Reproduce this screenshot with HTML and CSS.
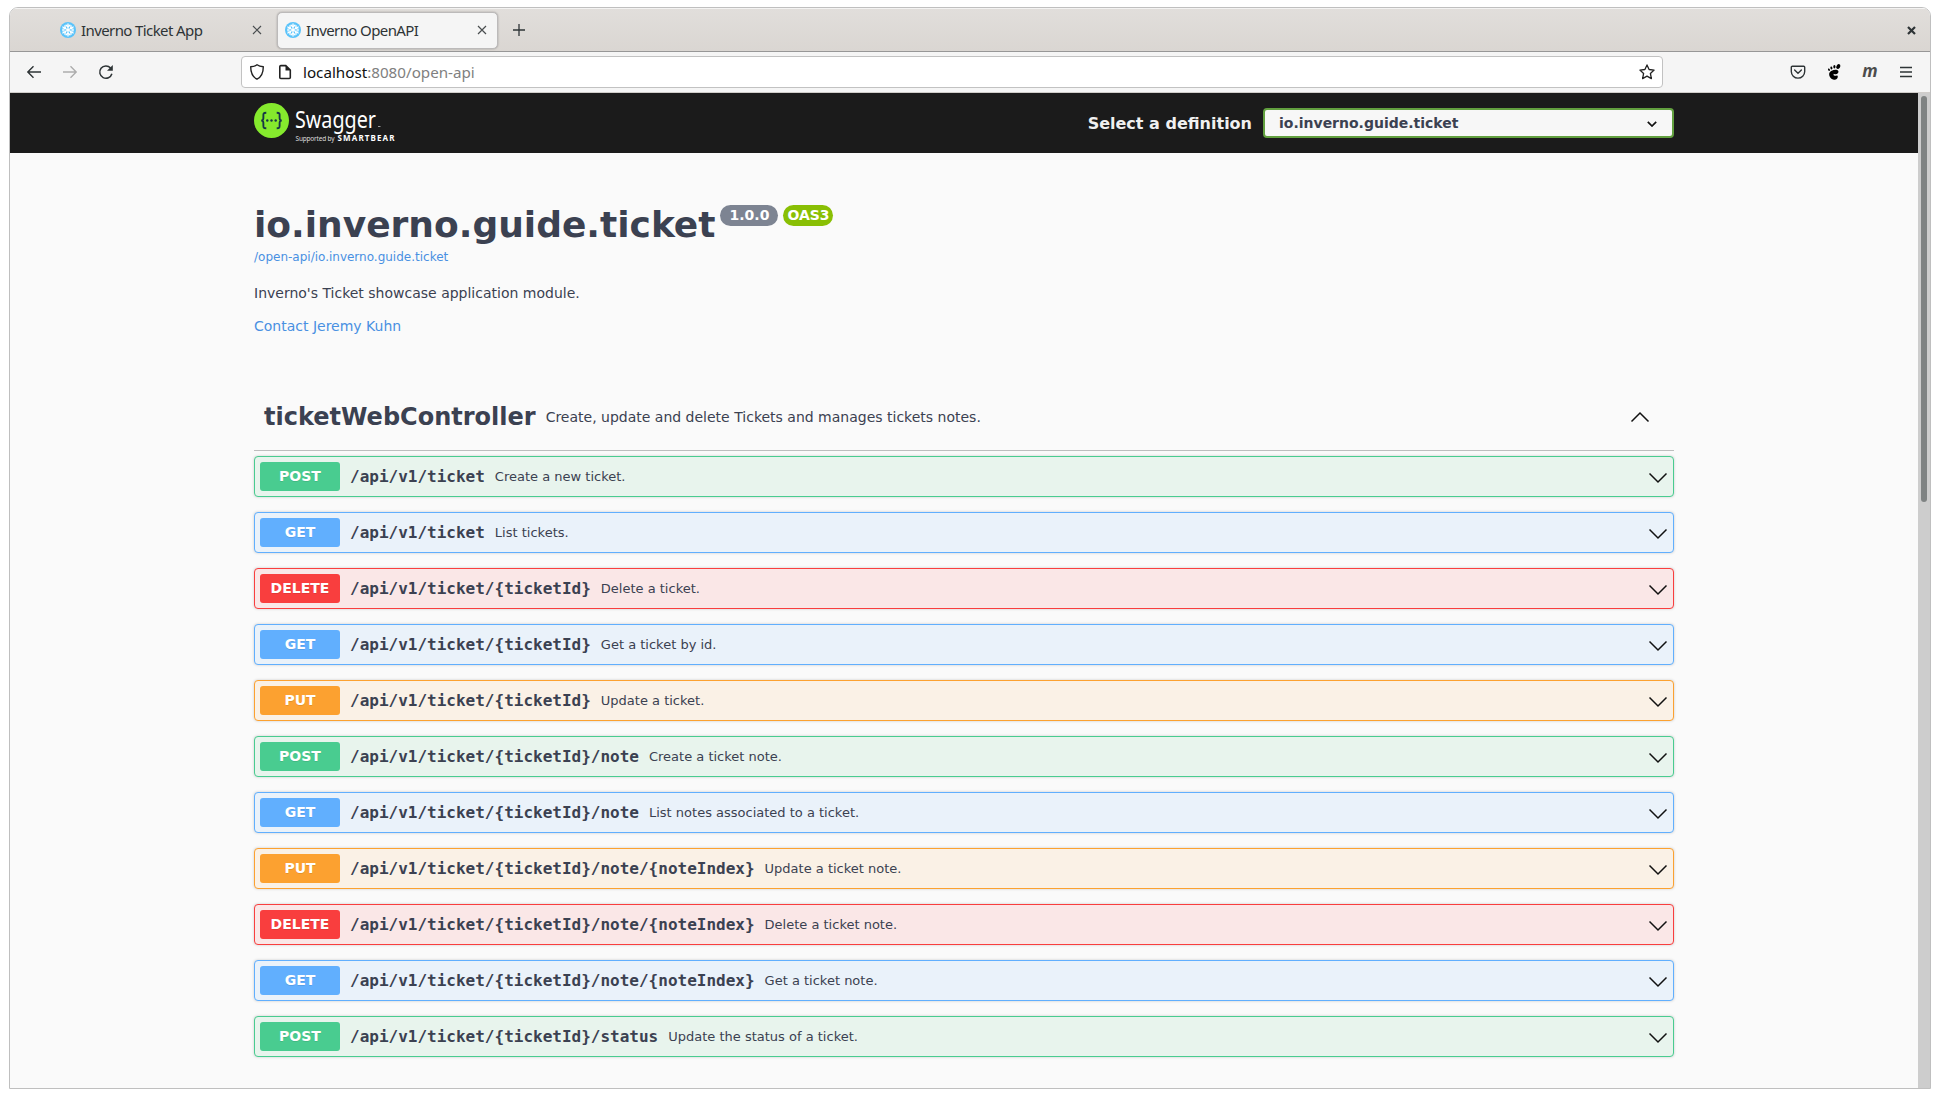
FILE: index.html
```html
<!DOCTYPE html>
<html lang="en">
<head>
<meta charset="utf-8">
<title>Inverno OpenAPI</title>
<link rel="stylesheet" href="styles.css">
</head>
<body>
<svg width="0" height="0" class="defs">
  <defs>
    <symbol id="flake" viewBox="0 0 16 16">
      <circle cx="8" cy="8" r="8" fill="#5ac3fa"/>
      <g stroke="#fff" stroke-width="1.300" fill="none">
        <g id="arm"><path d="M8 1.500v13M5.600 2.800 8 5.200l2.400-2.400M5.600 13.200 8 10.800l2.400 2.400"/></g>
        <use href="#arm" transform="rotate(60 8 8)"/>
        <use href="#arm" transform="rotate(120 8 8)"/>
      </g>
    </symbol>
    <symbol id="cross" viewBox="0 0 10 10"><path d="M1 1l8 8M9 1l-8 8" stroke="#4a4e50" stroke-width="1.200" fill="none"/></symbol>
    <symbol id="down" viewBox="0 0 20 20"><path d="M1.500 6.500 10 15l8.500-8.500" stroke="#111" stroke-width="1.500" fill="none"/></symbol>
  </defs>
</svg>
<div class="window">
  <div class="tabs">
    <div class="tab"><svg class="fav"><use href="#flake"/></svg><span>Inverno Ticket App</span><svg class="x"><use href="#cross"/></svg></div>
    <div class="tab active"><svg class="fav"><use href="#flake"/></svg><span>Inverno OpenAPI</span><svg class="x"><use href="#cross"/></svg></div>
    <svg class="plus" viewBox="0 0 12 12"><path d="M6 0v12M0 6h12" stroke="#2e3436" stroke-width="1.300"/></svg>
    <svg class="close" viewBox="0 0 9 9"><path d="M1 1l7 7M8 1l-7 7" stroke="#2e3436" stroke-width="2.200"/></svg>
  </div>
  <div class="toolbar">
    <div class="nav">
      <svg viewBox="0 0 16 16" fill="none" stroke="#2e3436" stroke-width="1.400"><path d="M15 8H2M7.500 2.300 1.800 8l5.700 5.700"/></svg>
      <svg viewBox="0 0 16 16" fill="none" stroke="#adadad" stroke-width="1.400"><path d="M1 8h13M8.500 2.300 14.200 8l-5.700 5.700"/></svg>
      <svg viewBox="0 0 16 16" fill="none" stroke="#2e3436" stroke-width="1.500"><path d="M13.900 9.800A6.200 6.200 0 1 1 12.600 4"/><path d="M14.800 1v5.800H9z" fill="#2e3436" stroke="none"/></svg>
    </div>
    <div class="url">
      <svg viewBox="0 0 16 16" fill="none" stroke="#222" stroke-width="1.400"><path d="M8 .8c2 1.500 4.200 1.900 6.300 2 0 5.700-1.300 10-6.300 12.400C3 12.800 1.700 8.500 1.700 2.800 3.800 2.700 6 2.300 8 .8z" stroke-linejoin="round"/></svg>
      <svg class="page" viewBox="0 0 16 16" fill="none" stroke="#222" stroke-width="1.600"><path d="M3.800 1.600h5L13.300 6v7.500a1 1 0 0 1-1 1H3.800a1 1 0 0 1-1-1v-11a1 1 0 0 1 1-.9z"/><path d="M8.500 1.500v5h5z" fill="#222" stroke="none"/></svg>
      <span class="addr"><b>localhost</b>:8080/open-api</span>
      <svg class="star" viewBox="0 0 16 16" fill="none" stroke="#222" stroke-width="1.300" stroke-linejoin="round"><path d="M8 .9l2.100 4.600 5 .6-3.700 3.400 1 5.100L8 12.100l-4.400 2.500 1-5.100L.9 6.100l5-.6z"/></svg>
    </div>
    <div class="tools">
      <svg viewBox="0 0 16 16" fill="none" stroke="#2e3436" stroke-width="1.400"><path d="M2.300 2.200h11.400a1 1 0 0 1 1 1v4.200a6.700 6.700 0 0 1-13.400 0V3.200a1 1 0 0 1 1-1z"/><path d="M4.600 6 8 9.200 11.400 6" stroke-linecap="round"/></svg>
      <svg viewBox="0 0 16 16" fill="#000"><ellipse cx="12.300" cy="2.500" rx="1.800" ry="2.500" transform="rotate(25 12.300 2.500)"/><ellipse cx="8.400" cy="2.800" rx="1.100" ry="1.700"/><ellipse cx="5.400" cy="3.900" rx="1" ry="1.500" transform="rotate(-15 5.400 3.900)"/><ellipse cx="3" cy="5.700" rx=".9" ry="1.300" transform="rotate(-30 3 5.700)"/><path d="M3.300 9C4.200 6 11.200 4.600 12.300 7c.9 2.300-2.600 4.200-4.400 2.700-.9 1.300 0 2.100 1.100 2 1.200 0 2-.7 2.700.2.500 2.300-1.500 3.900-3.600 3.800C5.200 15.600 2.500 12.200 3.300 9z"/></svg>
      <i class="m">m</i>
      <svg viewBox="0 0 16 16" stroke="#2e3436" stroke-width="1.400"><path d="M2 3.500h12M2 8h12M2 12.500h12"/></svg>
    </div>
  </div>
  <div class="view">
    <div class="doc">
      <header class="topbar">
        <div class="wrap">
          <svg class="logo" viewBox="0 0 142 42">
            <circle cx="17.500" cy="17.500" r="17.500" fill="#85ea2d"/>
            <g fill="none" stroke="#173647" stroke-width="1.900"><path d="M12.300 9.700c-3 0-3.100.8-2.900 4.200.1 2.500-.4 3.600-2.200 3.600 1.800 0 2.300 1.100 2.200 3.600-.2 3.400-.1 4.200 2.900 4.200M22.700 9.700c3 0 3.100.8 2.900 4.200-.1 2.500.4 3.600 2.200 3.600-1.800 0-2.300 1.100-2.200 3.600.2 3.400.1 4.200-2.900 4.200"/></g>
            <g fill="#173647"><circle cx="13.300" cy="17.500" r="1.200"/><circle cx="17.500" cy="17.500" r="1.200"/><circle cx="21.700" cy="17.500" r="1.200"/></g>
            <text x="41" y="24.500" class="brand" textLength="81" lengthAdjust="spacingAndGlyphs">Swagger</text>
            <path d="M124 23.500h2.500" stroke="#999"/>
            <text x="41.500" y="38" class="by" textLength="39">Supported by</text>
            <text x="83.500" y="38" class="bear" textLength="57">SMARTBEAR</text>
          </svg>
          <label class="pick"><span>Select a definition</span>
            <span class="select">io.inverno.guide.ticket<svg viewBox="0 0 10 6"><path d="M.8.800 5 5 9.200.800" fill="none" stroke="#111" stroke-width="1.700"/></svg></span>
          </label>
        </div>
      </header>
      <main class="wrap-main">
        <section class="info">
          <h1>io.inverno.guide.ticket<span class="ver">1.0.0</span><span class="ver oas">OAS3</span></h1>
          <a class="spec">/open-api/io.inverno.guide.ticket</a>
          <p>Inverno's Ticket showcase application module.</p>
          <a class="contact">Contact Jeremy Kuhn</a>
        </section>
        <div class="tag"><h3>ticketWebController</h3><small>Create, update and delete Tickets and manages tickets notes.</small><svg class="chev up"><use href="#down"/></svg></div>
        <div class="ops">
          <div class="op post"><b>POST</b><code>/api/v1/ticket</code><span>Create a new ticket.</span><svg class="chev"><use href="#down"/></svg></div>
          <div class="op get"><b>GET</b><code>/api/v1/ticket</code><span>List tickets.</span><svg class="chev"><use href="#down"/></svg></div>
          <div class="op delete"><b>DELETE</b><code>/api/v1/ticket/{ticketId}</code><span>Delete a ticket.</span><svg class="chev"><use href="#down"/></svg></div>
          <div class="op get"><b>GET</b><code>/api/v1/ticket/{ticketId}</code><span>Get a ticket by id.</span><svg class="chev"><use href="#down"/></svg></div>
          <div class="op put"><b>PUT</b><code>/api/v1/ticket/{ticketId}</code><span>Update a ticket.</span><svg class="chev"><use href="#down"/></svg></div>
          <div class="op post"><b>POST</b><code>/api/v1/ticket/{ticketId}/note</code><span>Create a ticket note.</span><svg class="chev"><use href="#down"/></svg></div>
          <div class="op get"><b>GET</b><code>/api/v1/ticket/{ticketId}/note</code><span>List notes associated to a ticket.</span><svg class="chev"><use href="#down"/></svg></div>
          <div class="op put"><b>PUT</b><code>/api/v1/ticket/{ticketId}/note/{noteIndex}</code><span>Update a ticket note.</span><svg class="chev"><use href="#down"/></svg></div>
          <div class="op delete"><b>DELETE</b><code>/api/v1/ticket/{ticketId}/note/{noteIndex}</code><span>Delete a ticket note.</span><svg class="chev"><use href="#down"/></svg></div>
          <div class="op get"><b>GET</b><code>/api/v1/ticket/{ticketId}/note/{noteIndex}</code><span>Get a ticket note.</span><svg class="chev"><use href="#down"/></svg></div>
          <div class="op post"><b>POST</b><code>/api/v1/ticket/{ticketId}/status</code><span>Update the status of a ticket.</span><svg class="chev"><use href="#down"/></svg></div>
        </div>
      </main>
    </div>
    <div class="scroll"><div class="thumb"></div></div>
  </div>
</div>
</body>
</html>
```

FILE: styles.css
```css
* { box-sizing: border-box; }
body { margin: 0; padding: 7px 9px 9px; height: 1098px; background: #fff; overflow: hidden; font-family: "DejaVu Sans", sans-serif; color: #3b4151; }
svg { display: block; flex: none; }
.defs { position: absolute; }
.window { height: 1082px; width: 1922px; border: 1px solid #bfbfbf; border-radius: 9px 9px 0 0; overflow: hidden; display: flex; flex-direction: column; }

.tabs { height: 44px; flex: none; display: flex; align-items: center; padding: 0 14px 0 42px; background: linear-gradient(#e1dedb, #dad6d2); border-top: 1px solid #f4f3f2; border-bottom: 1px solid #979797; font: 15px "Noto Sans", sans-serif; letter-spacing: -.6px; color: #2e3436; }
.tab { width: 221px; height: 37px; margin-right: 4px; display: flex; align-items: center; padding: 0 10px 0 7px; border: 1px solid transparent; border-radius: 5px; white-space: nowrap; }
.tab.active { background: #f5f5f5; border-color: #bcbaba; box-shadow: 0 0 2px rgba(0,0,0,.3); }
.fav { width: 16px; height: 16px; margin-right: 5px; }
.x { width: 10px; height: 10px; margin-left: auto; }
.plus { width: 12px; height: 12px; margin-left: 11px; }
.close { width: 9px; height: 9px; margin-left: auto; }

.toolbar { height: 41px; flex: none; display: flex; align-items: center; background: #f5f5f5; border-bottom: 1px solid #d0cdca; padding: 0 16px; }
.toolbar svg { width: 16px; height: 16px; }
.nav { display: flex; gap: 20px; width: 215px; }
.url { width: 1422px; height: 32px; background: #fff; border: 1px solid #c2c2c2; border-radius: 4px; display: flex; align-items: center; padding: 0 7px; font: 15.200px "Noto Sans", sans-serif; color: #808080; }
.page { margin-left: 12px; margin-right: 10px; }
.addr b { font-weight: 400; color: #111; }
.star { margin-left: auto; }
.tools { margin-left: auto; display: flex; gap: 20px; align-items: center; }
.m { width: 16px; font: italic bold 17px/16px "Noto Sans", sans-serif; color: #4c4c4c; text-align: center; height: 19px; }

.view { flex: 1; display: flex; min-height: 0; }
.doc { flex: 1; background: #fafafa; }
.scroll { width: 12px; background: #cdcdcd; padding: 3px 3px 0; }
.thumb { width: 6px; height: 406px; background: #7f8383; border-radius: 3px; }
.topbar { height: 60px; background: #1b1b1b; padding: 0 244px; }
.wrap { display: flex; height: 60px; justify-content: space-between; align-items: center; }
.logo { width: 142px; height: 42px; margin-top: 2px; }
.brand { font: 23px "Noto Sans", sans-serif; fill: #fff; }
.by { font: 6.500px "Noto Sans", sans-serif; fill: #ddd; }
.bear { font: bold 8px "Noto Sans", sans-serif; fill: #fff; }
.pick { display: flex; align-items: center; color: #f0f0f0; font-weight: 700; font-size: 16px; gap: 11px; }
.select { width: 411px; height: 30px; background: #f7f7f7; border: 2px solid #62a03f; border-radius: 4px; color: #3b4151; font-size: 14px; display: flex; align-items: center; justify-content: space-between; padding: 0 15px 0 14px; }
.select svg { width: 10px; height: 6px; margin-top: 2px; }

.wrap-main { padding: 49px 244px 0; }
.info { height: 184px; display: flex; flex-direction: column; align-items: flex-start; }
.info h1 { margin: 0; font-size: 36px; line-height: 45px; height: 44px; display: flex; align-items: flex-start; }
.ver { margin: 3px 0 0 5px; height: 21px; width: 58px; border-radius: 11px; background: #7d8492; color: #fff; font-size: 14px; line-height: 20px; text-align: center; }
.ver.oas { width: 50px; background: #89bf04; }
a { color: #4990e2; }
.spec { font-size: 12px; line-height: 14px; margin-top: 4px; }
.info p { margin: 19px 0 0; font-size: 14px; line-height: 20px; }
.contact { font-size: 14px; line-height: 20px; margin-top: 13px; }
.tag { height: 65px; border-bottom: 1px solid #bdbebe; display: flex; align-items: center; padding: 0 24px 2px 10px; }
.tag h3 { margin: 0 10px 0 0; font-size: 24px; }
.tag small { font-size: 14px; }
.chev { width: 20px; height: 20px; margin-left: auto; }
.up { transform: rotate(180deg); margin-top: 2px; }
.ops { display: flex; flex-direction: column; gap: 15px; padding-top: 5px; }
.op { height: 41px; border: 1px solid; border-radius: 4px; box-shadow: 0 0 3px rgba(0,0,0,.19); display: flex; align-items: center; padding: 0 5px; }
.op b { width: 80px; height: 29px; border-radius: 3px; color: #fff; font-size: 14px; line-height: 28px; text-align: center; text-shadow: 0 1px 0 rgba(0,0,0,.1); }
.op code { font: bold 16px "DejaVu Sans Mono", monospace; margin: 0 10px; }
.op span { font-size: 13px; }
.op code, .op span { color: #3b4151; }
.post { border-color: #49cc90; background: #e8f4ed; }
.post b { background: #49cc90; }
.get { border-color: #61affe; background: #eaf2fa; }
.get b { background: #61affe; }
.delete { border-color: #f93e3e; background: #fae7e7; }
.delete b { background: #f93e3e; }
.put { border-color: #fca130; background: #faf1e6; }
.put b { background: #fca130; }
```
